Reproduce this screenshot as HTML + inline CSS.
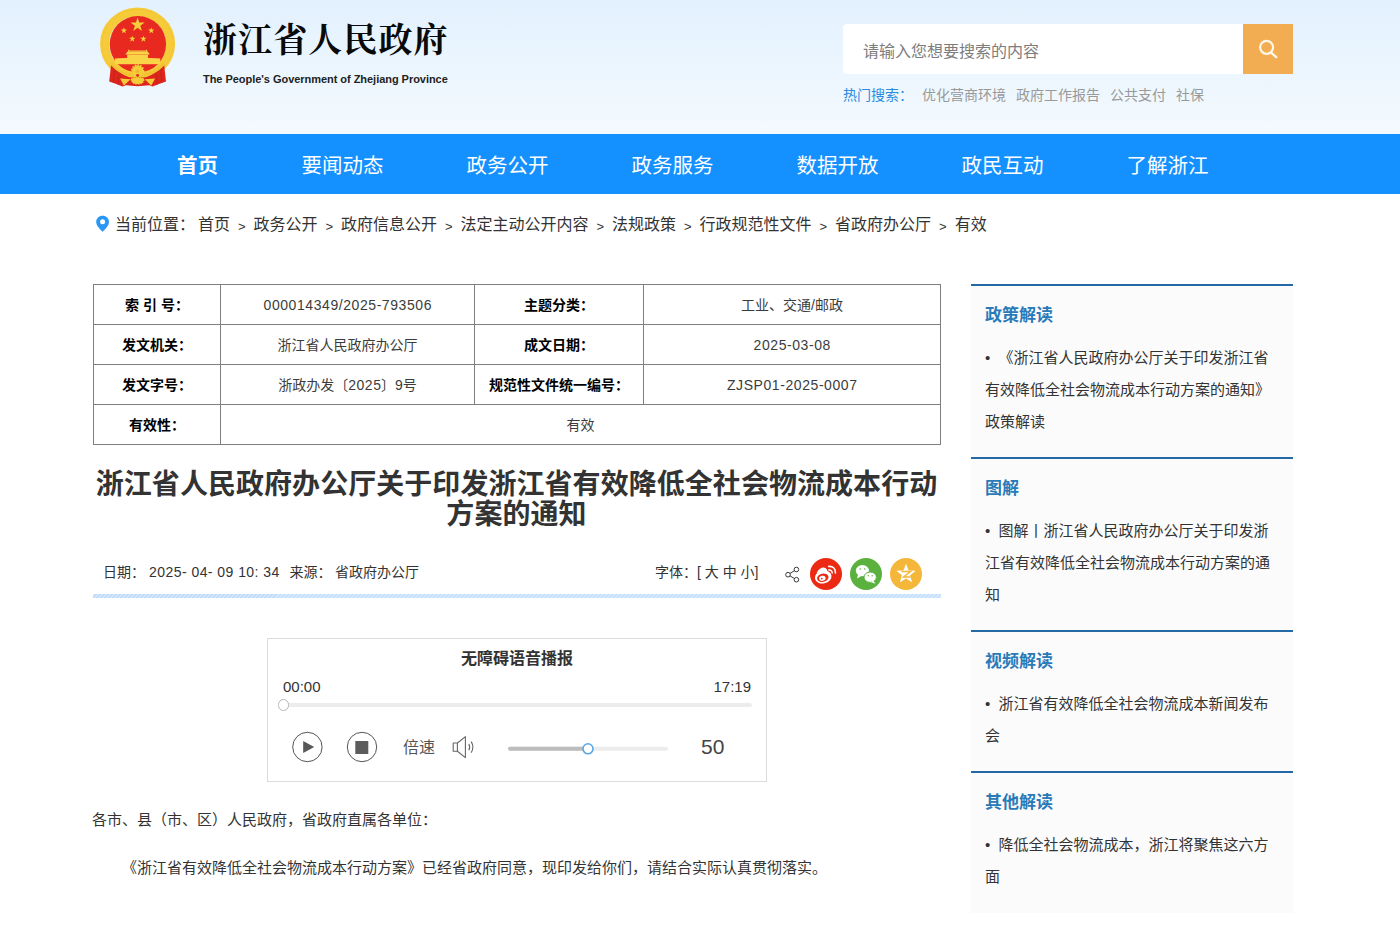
<!DOCTYPE html>
<html lang="zh-CN">
<head>
<meta charset="utf-8">
<title>浙江省人民政府</title>
<style>
*{box-sizing:border-box;margin:0;padding:0}
html,body{width:1400px;height:925px;overflow:hidden;background:#fff}
body{font-family:"Liberation Sans","Noto Sans CJK SC",sans-serif;color:#333;position:relative}
.abs{position:absolute;white-space:nowrap}
#hdr{position:absolute;left:0;top:0;width:1400px;height:134px;background:linear-gradient(180deg,#e3f1fe 0%,#eaf5fe 45%,#f4fafe 100%)}
#logo-cn{left:203px;top:16px;font-family:"Liberation Serif","Noto Serif CJK SC",serif;font-weight:700;font-size:34px;line-height:50px;color:#0a0a0a;letter-spacing:1.1px}
#logo-en{left:203px;top:72px;font-size:11px;font-weight:bold;line-height:14px;color:#222;letter-spacing:-0.04px}
#search{position:absolute;left:843px;top:24px;width:400px;height:50px;background:#fff;border-radius:4px 0 0 4px}
#search span{position:absolute;left:20px;top:2.5px;line-height:50px;font-size:16px;color:#7d7d7d}
#sbtn{position:absolute;left:1243px;top:24px;width:50px;height:50px;background:#f2ac52}
#hot{left:843px;top:85px;font-size:14px;line-height:20px;color:#999}
#hot b{font-weight:normal;color:#2a8be0;margin-right:9px}
#hot span{margin-right:10px}
#nav{position:absolute;left:0;top:134px;width:1400px;height:60px;background:#1591ff}
#nav a{position:absolute;top:2px;width:165px;text-align:center;line-height:60px;font-size:20.5px;color:#fff}
#crumb{left:115px;top:213px;font-size:16px;line-height:24px;color:#333}
#crumb i{font-style:normal;display:inline-block;width:23.5px;text-align:center;font-size:13px;position:relative;top:1px}
#crumb u{text-decoration:none;display:inline-block;width:3px}
table{position:absolute;left:93px;top:284px;width:847px;border-collapse:collapse;table-layout:fixed}
td{border:1px solid #7f7f7f;height:40px;text-align:center;font-size:14px;color:#3c3c3c;vertical-align:middle;line-height:20px}
td.k{font-weight:bold;color:#000}
.n{letter-spacing:.57px;margin-right:-.57px}
#title{position:absolute;left:92.5px;top:470px;width:848px;letter-spacing:.05px;text-align:center;font-size:28px;line-height:30px;font-weight:bold;color:#333}
#meta{left:103px;top:562px;font-size:14px;line-height:20px;color:#333}
.meta2{top:562px;font-size:14px;line-height:20px;color:#333}
#fontsz{left:655px;top:562px;font-size:14px;line-height:20px;color:#333}
#stripe{position:absolute;left:93px;top:594px;width:848px;height:4px;background:repeating-linear-gradient(135deg,#d2e8fe 0,#d2e8fe 2.05px,#bedaf6 2.05px,#bedaf6 2.83px)}
#audio{position:absolute;left:267px;top:638px;width:500px;height:144px;border:1px solid #dcdcdc;background:#fff}
.body{font-size:15px;line-height:24px;color:#333}
#side{position:absolute;left:971px;top:284px;width:322px;height:629px;background:#fbfbfc}
.sec{position:absolute;left:0;width:322px;border-top:2px solid #2369a6}
.sec h3{position:absolute;left:14px;top:18px;font-size:17px;line-height:24px;color:#2a7ab8;font-weight:bold}
.sec p{position:absolute;left:14px;top:56px;width:292px;font-size:15px;line-height:32px;color:#333}
</style>
</head>
<body>
<div id="hdr"></div>
<svg id="emblem" style="position:absolute;left:95px;top:0" width="90" height="95" viewBox="95 0 90 95">
<ellipse cx="137.6" cy="43.9" rx="33" ry="32" fill="none" stroke="#f6cb3a" stroke-width="9"/>
<ellipse cx="137.6" cy="43.9" rx="35.4" ry="34.4" fill="none" stroke="#eebb2e" stroke-width="0.9" stroke-dasharray="1.6 1.4" opacity=".75"/>
<circle cx="137.9" cy="44.3" r="28.2" fill="#e8291f"/>
<g fill="#f7cf3d">
<polygon points="137.60,17.50 139.26,22.61 144.64,22.61 140.29,25.77 141.95,30.89 137.60,27.73 133.25,30.89 134.91,25.77 130.56,22.61 135.94,22.61"/>
<polygon points="123.90,27.20 124.66,29.55 127.13,29.55 125.14,31.00 125.90,33.35 123.90,31.90 121.90,33.35 122.66,31.00 120.67,29.55 123.14,29.55"/>
<polygon points="151.30,27.20 152.06,29.55 154.53,29.55 152.54,31.00 153.30,33.35 151.30,31.90 149.30,33.35 150.06,31.00 148.07,29.55 150.54,29.55"/>
<polygon points="132.30,35.50 133.06,37.85 135.53,37.85 133.54,39.30 134.30,41.65 132.30,40.20 130.30,41.65 131.06,39.30 129.07,37.85 131.54,37.85"/>
<polygon points="143.40,35.50 144.16,37.85 146.63,37.85 144.64,39.30 145.40,41.65 143.40,40.20 141.40,41.65 142.16,39.30 140.17,37.85 142.64,37.85"/>
</g>
<g fill="#f8d446">
<path d="M128.3 49.4 L129.6 50.5 L145.6 50.5 L146.9 49.4 L147.4 51.6 L127.8 51.6 Z"/>
<path d="M125.3 54.6 L127.6 51.4 L147.6 51.4 L149.9 54.6 Z"/>
<rect x="127.2" y="54.6" width="20.8" height="3.6"/>
<path d="M115 64.2 L115 58.6 Q116 58 126 58 L149.2 58 Q159.2 58 160.3 58.6 L160.3 64.2 Z"/>
</g>
<path d="M111.1 64.5 L109.2 81.6 L115.6 83.8 L122.5 86.6 L126 85.3 L137.6 86.2 L149.2 85.3 L152.7 86.6 L159.6 83.8 L166 81.6 L164.1 64.5 Q150 79.6 137.6 78.6 Q125 79.6 111.1 64.5 Z" fill="#dc261c"/>
<path d="M114.6 70 L113.4 83 M118.8 74 L118 84.8 M160.6 70 L161.8 83 M156.4 74 L157.2 84.8" stroke="#b81d16" stroke-width="0.9" fill="none" opacity=".65"/>
<path d="M111.4 63.8 Q122.5 76.2 137.6 75.4 Q152.7 76.2 164 63.8" fill="none" stroke="#f3c233" stroke-width="3"/>
<circle cx="137.6" cy="71" r="5.7" fill="#f6cb3a" stroke="#f6cb3a" stroke-width="2.2" stroke-dasharray="1.5 1.1"/>
<circle cx="137.6" cy="71.4" r="1.8" fill="#eeb730"/>
<path d="M120.4 73.2 Q129 79.6 137.6 76.4 Q146.2 79.6 154.8 73.2 L155.4 76 Q146.6 82.4 137.6 79 Q128.6 82.4 119.8 76 Z" fill="#dd261c"/>
<circle cx="137.6" cy="75.3" r="1.4" fill="#dd261c"/>
<polygon points="120.1,78.4 130.6,79.2 123.9,85.5" fill="#f6cb3a"/>
<polygon points="155.1,78.4 144.6,79.2 151.3,85.5" fill="#f6cb3a"/>
<path d="M131.2 79 Q137.6 75.6 144 79 Q144 84 137.6 84 Q131.2 84 131.2 79 Z" fill="#f6cb3a" stroke="#f6cb3a" stroke-width="1.2" stroke-dasharray="1.3 1"/>
</svg>
<div class="abs" id="logo-cn">浙江省人民政府</div>
<div class="abs" id="logo-en">The People's Government of Zhejiang Province</div>
<div id="search"><span>请输入您想要搜索的内容</span></div>
<div id="sbtn"><svg width="50" height="50" viewBox="0 0 50 50" style="position:absolute;left:0;top:0"><circle cx="23.6" cy="23.3" r="6.5" fill="none" stroke="#fff8e8" stroke-width="2.2"/><path d="M28.4 28.8 L33.2 33.2" stroke="#fff8e8" stroke-width="2.4" stroke-linecap="round"/></svg></div>
<div class="abs" id="hot"><b>热门搜索：</b><span>优化营商环境</span><span>政府工作报告</span><span>公共支付</span><span>社保</span></div>
<div id="nav">
<a style="left:115px;font-weight:bold">首页</a>
<a style="left:260px">要闻动态</a>
<a style="left:425px">政务公开</a>
<a style="left:590px">政务服务</a>
<a style="left:755px">数据开放</a>
<a style="left:920px">政民互动</a>
<a style="left:1085px">了解浙江</a>
</div>
<svg style="position:absolute;left:95px;top:215px" width="16" height="18" viewBox="0 0 16 18"><path d="M7.6 0.8 C3.9 0.8 1.2 3.5 1.2 6.9 C1.2 10.6 5 14 7.6 16.8 C10.2 14 14 10.6 14 6.9 C14 3.5 11.3 0.8 7.6 0.8 Z" fill="#2b97f5"/><circle cx="7.6" cy="6.7" r="2.5" fill="#fff"/></svg>
<div class="abs" id="crumb">当前位置：<u></u>首页<i>&gt;</i>政务公开<i>&gt;</i>政府信息公开<i>&gt;</i>法定主动公开内容<i>&gt;</i>法规政策<i>&gt;</i>行政规范性文件<i>&gt;</i>省政府办公厅<i>&gt;</i>有效</div>
<table>
<colgroup><col style="width:127px"><col style="width:254px"><col style="width:169px"><col style="width:297px"></colgroup>
<tr><td class="k">索 引 号：</td><td><span class="n">000014349/2025-793506</span></td><td class="k">主题分类：</td><td>工业、交通/邮政</td></tr>
<tr><td class="k">发文机关：</td><td>浙江省人民政府办公厅</td><td class="k">成文日期：</td><td><span class="n">2025-03-08</span></td></tr>
<tr><td class="k">发文字号：</td><td>浙政办发〔<span class="n">2025</span>〕<span class="n">9</span>号</td><td class="k">规范性文件统一编号：</td><td><span class="n">ZJSP01-2025-0007</span></td></tr>
<tr><td class="k">有效性：</td><td colspan="3">有效</td></tr>
</table>
<div id="title">浙江省人民政府办公厅关于印发浙江省有效降低全社会物流成本行动方案的通知</div>
<div class="abs" id="meta">日期：</div><div class="abs meta2" style="left:149px;letter-spacing:.45px">2025- 04- 09 10: 34</div><div class="abs meta2" style="left:289.5px">来源：</div><div class="abs meta2" style="left:335px">省政府办公厅</div>
<div class="abs" id="fontsz">字体：[ 大 中 小]</div>
<svg style="position:absolute;left:780px;top:555px" width="150" height="40" viewBox="780 555 150 40">
<g fill="none" stroke="#3a3a3a" stroke-width="1"><circle cx="796.4" cy="569.5" r="2.3"/><circle cx="788" cy="574.7" r="2.3"/><circle cx="796.4" cy="579.7" r="2.3"/><path d="M794.4 570.7 L790 573.5 M790 575.9 L794.4 578.5"/></g>
<circle cx="826" cy="574" r="16" fill="#ec2a14"/>
<g fill="none" stroke="#fff" stroke-linecap="round">
<ellipse cx="823.2" cy="577" rx="8.4" ry="6.4" fill="#fff" stroke="none" transform="rotate(-12 823.2 577)"/>
<ellipse cx="822.8" cy="577.8" rx="5.8" ry="4.1" fill="#ec2a14" stroke="none" transform="rotate(-12 822.8 577.8)"/>
<ellipse cx="822.4" cy="578.3" rx="3.3" ry="2.5" fill="#fff" stroke="none" transform="rotate(-12 822.4 578.3)"/>
<circle cx="821.8" cy="578.6" r="0.9" fill="#ec2a14" stroke="none"/>
<path d="M828.8 570 Q832 569.8 832.2 573" stroke-width="1.4"/>
<path d="M828.8 566.4 Q835.6 566.2 835.4 573" stroke-width="1.6"/>
<path d="M817.6 572.6 Q821.4 567 825.2 568.8 Q827.2 570.2 826 572.6" stroke-width="1.6" fill="#fff"/>
</g>
<circle cx="866" cy="574" r="16" fill="#5bb13e"/>
<g fill="#fff">
<ellipse cx="862.4" cy="570.6" rx="6.6" ry="5.6"/>
<path d="M858 574.6 L857 578.4 L861.4 576 Z"/>
<ellipse cx="870.2" cy="577.2" rx="6.2" ry="5.2" stroke="#5bb13e" stroke-width="1"/>
<path d="M873.4 581 L875.6 583.8 L871 582.2 Z"/>
</g>
<g fill="#5bb13e"><circle cx="860.2" cy="569" r="0.8"/><circle cx="864.8" cy="569" r="0.8"/><circle cx="868.2" cy="575.8" r="0.7"/><circle cx="872.2" cy="575.8" r="0.7"/></g>
<circle cx="906" cy="574" r="16" fill="#f4b73a"/>
<polygon points="906.00,563.80 908.58,570.45 915.70,570.85 910.17,575.35 912.00,582.25 906.00,578.40 900.00,582.25 901.83,575.35 896.30,570.85 903.42,570.45" fill="#fff"/>
<path d="M901.6 571.6 L910.4 571.6 L903.6 577 L910.8 577" fill="none" stroke="#f4b73a" stroke-width="1.5"/>
</svg>
<div id="stripe"></div>
<div id="audio">
<div class="abs" style="left:0;top:8px;width:498px;text-align:center;font-size:16px;font-weight:bold;line-height:24px;color:#333">无障碍语音播报</div>
<div class="abs" style="left:15px;top:38px;font-size:15px;line-height:20px;color:#333">00:00</div>
<div class="abs" style="right:15px;top:38px;font-size:15px;line-height:20px;color:#333">17:19</div>
<div style="position:absolute;left:15px;top:63.5px;width:469px;height:4px;border-radius:2px;background:#ececec"></div>
<div style="position:absolute;left:9.5px;top:60px;width:11.5px;height:11.5px;border-radius:50%;border:1.7px solid #b8b8b8;background:#fff"></div>
<svg style="position:absolute;left:0;top:90px" width="498" height="40" viewBox="268 729 498 40">
<circle cx="307.4" cy="747" r="14.7" fill="#fff" stroke="#555" stroke-width="1"/>
<path d="M303.2 741 L314.2 747 L303.2 753 Z" fill="#585858"/>
<circle cx="362" cy="747" r="14.7" fill="#fff" stroke="#555" stroke-width="1"/>
<rect x="355.3" y="741" width="13" height="13" fill="#5c5c5c"/>
<g fill="none" stroke="#666" stroke-width="1.1" stroke-linejoin="round"><path d="M453.2 743 L457.4 743 L465.4 736.6 L465.4 757.6 L457.4 751.2 L453.2 751.2 Z"/><path d="M457.4 743 L457.4 751.2"/><path d="M468.8 744 Q470.6 747.1 468.8 750.2"/><path d="M471.2 741.6 Q474.6 747.1 471.2 752.6"/></g>
<rect x="508" y="746.8" width="160" height="4" rx="2" fill="#ececec"/>
<rect x="508" y="746.8" width="80" height="4" rx="2" fill="#bdbdbd"/>
<circle cx="588" cy="748.8" r="5" fill="#fff" stroke="#5aa8ea" stroke-width="1.6"/>
</svg>
<div class="abs" style="left:135px;top:97px;font-size:16px;line-height:24px;color:#555">倍速</div>
<div class="abs" style="left:433px;top:94px;font-size:21px;line-height:28px;color:#444">50</div>
</div>
<div class="abs body" style="left:92px;top:808px">各市、县（市、区）人民政府，省政府直属各单位：</div>
<div class="abs body" style="left:122px;top:856px">《浙江省有效降低全社会物流成本行动方案》已经省政府同意，现印发给你们，请结合实际认真贯彻落实。</div>
<div id="side">
<div class="sec" style="top:0;height:173px"><h3>政策解读</h3><p>•&nbsp; 《浙江省人民政府办公厅关于印发浙江省有效降低全社会物流成本行动方案的通知》政策解读</p></div>
<div class="sec" style="top:173px;height:173px"><h3>图解</h3><p>•&nbsp; 图解丨浙江省人民政府办公厅关于印发浙江省有效降低全社会物流成本行动方案的通知</p></div>
<div class="sec" style="top:346px;height:141px"><h3>视频解读</h3><p>•&nbsp; 浙江省有效降低全社会物流成本新闻发布会</p></div>
<div class="sec" style="top:487px;height:140px"><h3>其他解读</h3><p>•&nbsp; 降低全社会物流成本，浙江将聚焦这六方面</p></div>
</div>
</body>
</html>
